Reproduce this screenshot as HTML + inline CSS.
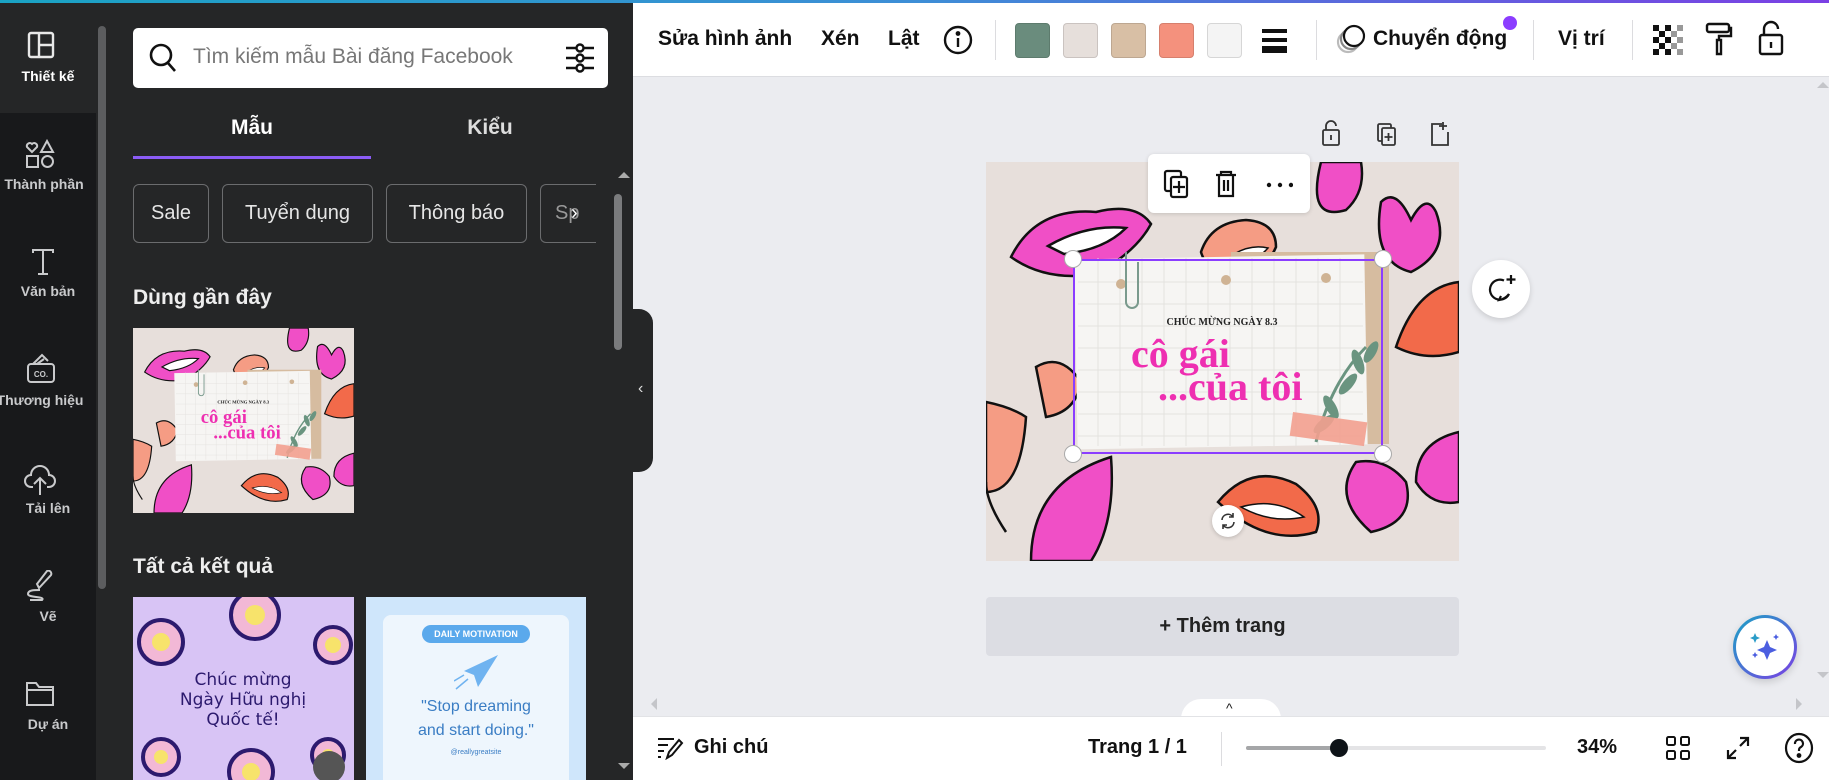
<!DOCTYPE html>
<html><head><meta charset="utf-8"><style>
*{margin:0;padding:0;box-sizing:border-box}
body{width:1829px;height:780px;overflow:hidden;background:#ebecf0;font-family:"Liberation Sans","DejaVu Sans",sans-serif;position:relative}
.a{position:absolute}
.nl{position:absolute;width:96px;text-align:center;color:#c9cacc;font-size:14px;font-weight:bold;white-space:nowrap}
.chip{position:absolute;top:184px;height:59px;border:1px solid #6b6c6e;border-radius:6px;color:#e6e6e6;font-size:20px;line-height:57px;text-align:center}
.tb{color:#111;font-size:21px;font-weight:bold;top:27px}
.sw{position:absolute;top:23px;width:35px;height:35px;border-radius:4px;border:1px solid rgba(0,0,0,.12)}
.sep{position:absolute;width:1px;background:#dcdcdf}
</style></head><body>
<div class="a" style="left:0;top:0;width:1829px;height:3px;background:linear-gradient(90deg,#1aa3c4,#3d8ed6 50%,#7b3fe4)"></div>

<!-- nav rail -->
<div class="a" style="left:0;top:3px;width:96px;height:777px;background:#18191b"></div>
<div class="a" style="left:0;top:3px;width:96px;height:110px;background:#252627"></div>
<svg class="a" style="left:27px;top:31px" width="28" height="28" viewBox="0 0 28 28" fill="none" stroke="#e8e8e8" stroke-width="2.4"><rect x="2" y="2" width="24" height="24" rx="2"/><path d="M12 2v24M12 14h14"/></svg>
<div class="nl" style="top:68px;color:#fff">Thiết kế</div>
<svg class="a" style="left:25px;top:139px" width="30" height="30" viewBox="0 0 30 30" fill="none" stroke="#c9cacc" stroke-width="2"><path d="M7 13l-5-5a3 3 0 0 1 5-3 3 3 0 0 1 5 3z"/><path d="M22 2l6 11h-12z"/><rect x="2" y="17" width="11" height="11"/><circle cx="22.5" cy="22.5" r="5.5"/></svg>
<div class="nl" style="top:176px;left:-4px">Thành phần</div>
<svg class="a" style="left:31px;top:248px" width="24" height="28" viewBox="0 0 24 28" fill="none" stroke="#c9cacc" stroke-width="2"><path d="M2 5V2h20v3M12 2v24M7 26h10"/></svg>
<div class="nl" style="top:283px">Văn bản</div>
<svg class="a" style="left:26px;top:352px" width="30" height="32" viewBox="0 0 30 32" fill="none" stroke="#c9cacc" stroke-width="2"><rect x="2" y="12" width="26" height="18" rx="3"/><path d="M7 12l9-9 6 6M11 12l7-5"/><text x="15" y="25" font-size="8" fill="#c9cacc" stroke="none" text-anchor="middle" font-family="Liberation Sans" font-weight="bold">CO.</text></svg>
<div class="nl" style="top:392px;left:-8px">Thương hiệu</div>
<svg class="a" style="left:24px;top:461px" width="32" height="36" viewBox="0 0 32 36" fill="none" stroke="#c9cacc" stroke-width="2"><path d="M9 26H7a6 6 0 0 1 0-12 9 9 0 0 1 18 0 6 6 0 0 1 0 12h-2"/><path d="M16 34V18M10 23l6-6 6 6"/></svg>
<div class="nl" style="top:500px">Tải lên</div>
<svg class="a" style="left:26px;top:570px" width="30" height="32" viewBox="0 0 30 32" fill="none" stroke="#c9cacc" stroke-width="2"><path d="M13 18l12-13a3 3 0 0 0-4-4L11 14zM14 20c-6 0-12 0-12 4s18 2 14 6H4"/></svg>
<div class="nl" style="top:608px">Vẽ</div>
<svg class="a" style="left:25px;top:681px" width="30" height="26" viewBox="0 0 30 26" fill="none" stroke="#c9cacc" stroke-width="2"><path d="M2 24V2h9l3 4h14v18z M2 9h26"/></svg>
<div class="nl" style="top:716px">Dự án</div>

<!-- panel -->
<div class="a" style="left:96px;top:3px;width:537px;height:777px;background:#252627"></div>
<div class="a" style="left:98px;top:26px;width:8px;height:563px;border-radius:4px;background:#5c5d5f"></div>
<div class="a" style="left:133px;top:28px;width:475px;height:60px;background:#fff;border-radius:5px"></div>
<svg class="a" style="left:149px;top:43px" width="28" height="30" viewBox="0 0 28 30" fill="none" stroke="#111" stroke-width="2.6"><circle cx="12" cy="12" r="10"/><path d="M19 20l7 8"/></svg>
<div class="a" style="left:193px;top:45px;color:#777;font-size:21px">Tìm kiếm mẫu Bài đăng Facebook</div>
<svg class="a" style="left:565px;top:43px" width="30" height="30" viewBox="0 0 30 30" fill="none" stroke="#111" stroke-width="2.4"><path d="M1 5h28M1 15h28M1 25h28"/><circle cx="15" cy="5" r="3.5" fill="#fff"/><circle cx="15" cy="15" r="3.5" fill="#fff"/><circle cx="15" cy="25" r="3.5" fill="#fff"/></svg>
<div class="a" style="left:133px;top:116px;width:238px;text-align:center;color:#fff;font-size:21px;font-weight:bold">Mẫu</div>
<div class="a" style="left:371px;top:116px;width:238px;text-align:center;color:#ddd;font-size:21px;font-weight:bold">Kiểu</div>
<div class="a" style="left:133px;top:156px;width:238px;height:3px;background:#8b5cf6"></div>
<div class="chip" style="left:133px;width:76px">Sale</div>
<div class="chip" style="left:222px;width:151px">Tuyển dụng</div>
<div class="chip" style="left:386px;width:141px">Thông báo</div>
<div class="chip" style="left:540px;width:56px;text-align:left;padding-left:14px;border-right:none;border-radius:6px 0 0 6px;overflow:hidden;color:#999">Sp<span style="position:absolute;left:30px;top:0;color:#fff">›</span></div>
<div class="a" style="left:614px;top:194px;width:8px;height:156px;border-radius:4px;background:#7a7b7d"></div>
<div class="a" style="left:133px;top:286px;color:#eee;font-size:21px;font-weight:bold">Dùng gần đây</div>
<div class="a" style="left:133px;top:555px;color:#eee;font-size:21px;font-weight:bold">Tất cả kết quả</div>

<svg class="a" style="left:133px;top:328px" width="221" height="185" viewBox="0 0 473 399" preserveAspectRatio="none"><use href="#design"/></svg>

<!-- results -->
<div class="a" style="left:133px;top:597px;width:221px;height:183px;background:#d8c4f5;overflow:hidden">
<svg width="221" height="183" viewBox="0 0 221 183"><g stroke="#2c1a6e" stroke-width="4" fill="#f2b8d6"><circle cx="28" cy="45" r="22"/><circle cx="122" cy="18" r="24"/><circle cx="200" cy="48" r="18"/><circle cx="28" cy="160" r="18"/><circle cx="118" cy="175" r="22"/><circle cx="195" cy="158" r="16"/></g><g fill="#f7e36b"><circle cx="28" cy="45" r="9"/><circle cx="122" cy="18" r="10"/><circle cx="200" cy="48" r="8"/><circle cx="28" cy="160" r="7"/><circle cx="118" cy="175" r="9"/><circle cx="195" cy="158" r="6"/></g><text x="110" y="88" font-size="17" fill="#2c1a6e" text-anchor="middle" font-family="DejaVu Sans">Chúc mừng</text><text x="110" y="108" font-size="17" fill="#2c1a6e" text-anchor="middle" font-family="DejaVu Sans">Ngày Hữu nghị</text><text x="110" y="128" font-size="17" fill="#2c1a6e" text-anchor="middle" font-family="DejaVu Sans">Quốc tế!</text><circle cx="196" cy="170" r="16" fill="#555"/></svg></div>
<div class="a" style="left:366px;top:597px;width:220px;height:183px;background:#cfe6fb;overflow:hidden">
<div class="a" style="left:17px;top:18px;width:186px;height:175px;background:#eef6fd;border-radius:8px"></div>
<div class="a" style="left:56px;top:28px;width:108px;height:18px;border-radius:9px;background:#5aa9ec;color:#fff;font-size:9px;line-height:18px;text-align:center;font-weight:bold">DAILY MOTIVATION</div>
<svg class="a" style="left:88px;top:58px" width="44" height="36" viewBox="0 0 44 36" fill="#6fb3f0"><path d="M44 0L10 16l10 4zM44 0L20 20l4 12z"/><path d="M14 24l-12 10M10 20l-10 6" stroke="#6fb3f0" stroke-width="1.5"/></svg>
<div class="a" style="left:0;top:98px;width:220px;text-align:center;color:#3a7dc4;font-size:16px;line-height:24px">"Stop dreaming<br>and start doing."</div>
<div class="a" style="left:0;top:152px;width:220px;text-align:center;color:#3a7dc4;font-size:7px">@reallygreatsite</div></div>

<div class="a" style="left:618px;top:172px;width:0;height:0;border:6px solid transparent;border-bottom-color:#aaa;border-top:none"></div>
<div class="a" style="left:618px;top:763px;width:0;height:0;border:6px solid transparent;border-top-color:#aaa;border-bottom:none"></div>
<div class="a" style="left:633px;top:309px;width:20px;height:163px;background:#252627;border-radius:0 14px 14px 0"></div>
<div class="a" style="left:638px;top:380px;color:#ddd;font-size:16px">‹</div>

<!-- toolbar -->
<div class="a" style="left:633px;top:3px;width:1196px;height:74px;background:#fff;border-bottom:1px solid #dcdde1"></div>
<div class="a tb" style="left:658px">Sửa hình ảnh</div>
<div class="a tb" style="left:821px">Xén</div>
<div class="a tb" style="left:888px">Lật</div>
<svg class="a" style="left:943px;top:25px" width="30" height="30" viewBox="0 0 30 30" fill="none" stroke="#111" stroke-width="2.4"><circle cx="15" cy="15" r="13"/><path d="M15 13v9"/><circle cx="15" cy="8.5" r="1.2" fill="#111"/></svg>
<div class="sep" style="left:995px;top:20px;height:40px"></div>
<div class="sw" style="left:1015px;background:#6a8c7d"></div>
<div class="sw" style="left:1063px;background:#e6dfdb"></div>
<div class="sw" style="left:1111px;background:#d8bfa5"></div>
<div class="sw" style="left:1159px;background:#f4917d"></div>
<div class="sw" style="left:1207px;background:#f4f4f4"></div>
<div class="a" style="left:1262px;top:29px;width:25px;height:4px;background:#111"></div>
<div class="a" style="left:1262px;top:38px;width:25px;height:4px;background:#111"></div>
<div class="a" style="left:1262px;top:46px;width:25px;height:7px;background:#111"></div>
<div class="sep" style="left:1316px;top:20px;height:40px"></div>
<svg class="a" style="left:1334px;top:24px" width="34" height="32" viewBox="0 0 34 32" fill="none" stroke-width="2.2"><circle cx="14" cy="18" r="10" stroke="#bbb"/><circle cx="17" cy="15" r="10" stroke="#888"/><circle cx="20" cy="12" r="10" stroke="#111" fill="#fff"/></svg>
<div class="a tb" style="left:1373px">Chuyển động</div>
<div class="a" style="left:1503px;top:16px;width:14px;height:14px;border-radius:50%;background:#8b3dff"></div>
<div class="sep" style="left:1533px;top:20px;height:40px"></div>
<div class="a tb" style="left:1558px">Vị trí</div>
<div class="sep" style="left:1632px;top:20px;height:40px"></div>
<svg class="a" style="left:1653px;top:25px" width="30" height="30" viewBox="0 0 30 30"><g fill="#111"><rect x="0" y="0" width="6" height="6"/><rect x="12" y="0" width="6" height="6"/><rect x="6" y="6" width="6" height="6"/><rect x="0" y="12" width="6" height="6"/><rect x="12" y="12" width="6" height="6"/><rect x="6" y="18" width="6" height="6"/><rect x="0" y="24" width="6" height="6"/><rect x="12" y="24" width="6" height="6"/></g><g fill="#999"><rect x="18" y="6" width="6" height="6"/><rect x="18" y="18" width="6" height="6"/><rect x="24" y="0" width="6" height="6"/><rect x="24" y="12" width="6" height="6"/><rect x="24" y="24" width="6" height="6"/></g></svg>
<svg class="a" style="left:1705px;top:22px" width="28" height="34" viewBox="0 0 28 34" fill="none" stroke="#111" stroke-width="2.4"><rect x="2" y="2" width="22" height="8" rx="2"/><path d="M24 6h2v8H14v4M12 18h4v14h-4z"/></svg>
<svg class="a" style="left:1757px;top:20px" width="28" height="36" viewBox="0 0 28 36" fill="none" stroke="#111" stroke-width="2.4"><path d="M7 15V9a7 7 0 0 1 14 0"/><rect x="3" y="15" width="22" height="19" rx="2"/><path d="M14 22v6"/></svg>

<svg class="a" style="left:1320px;top:120px" width="130" height="28" viewBox="0 0 130 28" fill="none" stroke="#333" stroke-width="1.8"><path d="M6 10V6a5 5 0 0 1 10 0"/><rect x="3" y="10" width="16" height="15" rx="1.5"/><path d="M11 15v5"/><rect x="58" y="4" width="13" height="17" rx="1.5"/><rect x="62" y="8" width="13" height="17" rx="1.5" fill="#ebecf0"/><path d="M68.5 13v8M64.5 17h8"/><path d="M122 4h-10v21h16V12M123 2v8M119 6h8"/></svg>
<div class="a" style="left:1817px;top:82px;width:0;height:0;border:6px solid transparent;border-bottom-color:#c4c5c9;border-top:none"></div>
<div class="a" style="left:1817px;top:672px;width:0;height:0;border:6px solid transparent;border-top-color:#c4c5c9;border-bottom:none"></div>
<div class="a" style="left:651px;top:698px;width:0;height:0;border:6px solid transparent;border-right-color:#c4c5c9;border-left:none"></div>
<div class="a" style="left:1796px;top:698px;width:0;height:0;border:6px solid transparent;border-left-color:#c4c5c9;border-right:none"></div>

<!-- design -->
<svg class="a" style="left:986px;top:162px" width="473" height="399" viewBox="0 0 473 399">
<defs><g id="design">
<rect width="473" height="399" fill="#e7dfdb"/>
<g stroke="#111" stroke-width="2.5">
<path d="M25 95 Q50 45 110 50 Q150 40 165 62 Q150 90 110 112 Q60 120 25 95z" fill="#f04fc6"/>
<path d="M62 84 Q100 62 140 66 Q118 88 78 92z" fill="#fff"/>
<path d="M215 90 Q225 60 260 58 Q290 60 290 85 Q280 110 240 112 Q220 108 215 90z" fill="#f59c84"/>
<path d="M248 92 Q265 82 282 86 Q270 100 252 98z" fill="#fff" stroke-width="1.5"/>
<path d="M335 0 Q320 60 360 48 Q380 30 375 0z" fill="#f04fc6"/>
<path d="M395 40 Q385 100 425 110 Q465 90 450 50 Q440 30 425 58 Q410 25 395 40z" fill="#f04fc6"/>
<path d="M473 120 Q430 125 410 185 Q440 200 473 190z" fill="#f26a4a"/>
<path d="M0 240 Q25 245 40 255 Q35 330 0 330z" fill="#f59c84"/>
<path d="M20 370 Q0 340 0 320" fill="none"/>
<path d="M50 205 Q75 190 95 220 Q90 250 60 255z" fill="#f59c84"/>
<path d="M473 270 Q430 280 430 320 Q445 345 473 340z" fill="#f04fc6"/>
<path d="M370 300 Q345 335 385 370 Q430 360 420 320 Q400 295 370 300z" fill="#f04fc6"/>
<path d="M45 399 Q45 320 125 295 Q130 360 105 399z" fill="#f04fc6"/>
<path d="M232 340 Q265 300 310 322 Q340 345 330 370 Q280 385 232 340z" fill="#f26a4a"/>
<path d="M255 345 Q290 335 318 355 Q285 362 255 345z" fill="#fff" stroke-width="1.5"/>
</g>
<rect x="245" y="90" width="158" height="192" fill="#d6bca0"/>
<rect x="90" y="95" width="290" height="190" fill="#f6f5f3" transform="rotate(-1 230 190)"/>
<g stroke="#e4e2df" stroke-width="1"><path d="M92 120h285M92 142h285M92 164h285M92 186h285M92 208h285M92 230h285M92 252h285M92 274h285M112 96v188M134 96v188M156 96v188M178 96v188M200 96v188M222 96v188M244 96v188M266 96v188M288 96v188M310 96v188M332 96v188M354 96v188"/></g>
<circle cx="135" cy="122" r="5" fill="#cfb394"/><circle cx="240" cy="118" r="5" fill="#cfb394"/><circle cx="340" cy="116" r="5" fill="#cfb394"/>
<path d="M140 90 v50 a6 6 0 0 0 12 0 v-40" fill="none" stroke="#7a9a8d" stroke-width="2"/>
<text x="236" y="163" font-family="Liberation Serif" font-size="10" font-weight="bold" fill="#222" text-anchor="middle">CHÚC MỪNG NGÀY 8.3</text>
<text x="145" y="205" font-family="Liberation Serif" font-size="40" font-weight="bold" fill="#ee2fb1">cô gái</text>
<text x="172" y="238" font-family="Liberation Serif" font-size="40" font-weight="bold" fill="#ee2fb1">...của tôi</text>
<path d="M330 280 Q345 220 380 185" fill="none" stroke="#6a9480" stroke-width="3"/>
<g fill="#6a9480"><ellipse cx="345" cy="245" rx="5" ry="13" transform="rotate(-30 345 245)"/><ellipse cx="362" cy="222" rx="5" ry="13" transform="rotate(40 362 222)"/><ellipse cx="372" cy="200" rx="5" ry="13" transform="rotate(-20 372 200)"/><ellipse cx="338" cy="262" rx="5" ry="13" transform="rotate(50 338 262)"/><ellipse cx="385" cy="190" rx="5" ry="12" transform="rotate(30 385 190)"/></g>
<rect x="305" y="255" width="75" height="24" fill="#f3a08f" opacity=".9" transform="rotate(8 342 267)"/>
</g></defs>
<use href="#design"/>
</svg>

<div class="a" style="left:1073px;top:259px;width:310px;height:195px;border:2px solid #8b3dff"></div>
<div class="a" style="left:1064px;top:250px;width:18px;height:18px;border-radius:50%;background:#fff;border:1px solid #aaa"></div>
<div class="a" style="left:1374px;top:250px;width:18px;height:18px;border-radius:50%;background:#fff;border:1px solid #aaa"></div>
<div class="a" style="left:1064px;top:445px;width:18px;height:18px;border-radius:50%;background:#fff;border:1px solid #aaa"></div>
<div class="a" style="left:1374px;top:445px;width:18px;height:18px;border-radius:50%;background:#fff;border:1px solid #aaa"></div>
<div class="a" style="left:1212px;top:505px;width:32px;height:32px;border-radius:50%;background:#fff;box-shadow:0 1px 4px rgba(0,0,0,.2)"></div>
<svg class="a" style="left:1219px;top:512px" width="18" height="18" viewBox="0 0 18 18" fill="none" stroke="#333" stroke-width="1.6"><path d="M3 8a6 6 0 0 1 11-3M15 10a6 6 0 0 1-11 3M14 1v4h-4M4 17v-4h4"/></svg>
<div class="a" style="left:1148px;top:154px;width:162px;height:59px;background:#fff;border-radius:6px;box-shadow:0 1px 4px rgba(0,0,0,.15)"></div>
<svg class="a" style="left:1163px;top:169px" width="130" height="30" viewBox="0 0 130 30" fill="none" stroke="#111" stroke-width="2.2"><rect x="2" y="2" width="16" height="20" rx="2"/><rect x="8" y="8" width="16" height="20" rx="2" fill="#fff"/><path d="M16 12v12M10 18h12"/><path d="M53 6h20M58 6V3h10v3M56 6v21h14V6M61 11v11M65 11v11"/><circle cx="106" cy="16" r="2.2" fill="#111" stroke="none"/><circle cx="117" cy="16" r="2.2" fill="#111" stroke="none"/><circle cx="128" cy="16" r="2.2" fill="#111" stroke="none"/></svg>
<div class="a" style="left:1472px;top:260px;width:58px;height:58px;border-radius:50%;background:#fff;box-shadow:0 2px 6px rgba(0,0,0,.15)"></div>
<svg class="a" style="left:1485px;top:272px" width="34" height="34" viewBox="0 0 34 34" fill="none" stroke="#111" stroke-width="2.2"><path d="M19 8.5A10 10 0 1 0 24 22"/><path d="M24 22q-4 5-10 6l2-4"/><path d="M26 3v9M21.5 7.5h9"/></svg>

<div class="a" style="left:986px;top:597px;width:473px;height:59px;background:#dcdde3;border-radius:4px;text-align:center;line-height:59px;font-size:20px;font-weight:bold;color:#222">+ Thêm trang</div>
<div class="a" style="left:1733px;top:615px;width:64px;height:64px;border-radius:50%;background:linear-gradient(135deg,#1aa3c4,#7b3fe4);box-shadow:0 3px 8px rgba(0,0,0,.15)"></div>
<div class="a" style="left:1736px;top:618px;width:58px;height:58px;border-radius:50%;background:#fff"></div>
<svg class="a" style="left:1750px;top:632px" width="32" height="30" viewBox="0 0 32 30" fill="#4b5ee0"><path d="M17 8l3 7 7 3-7 3-3 7-3-7-7-3 7-3z"/><path d="M5 1l1.5 3.5L10 6 6.5 7.5 5 11 3.5 7.5 0 6l3.5-1.5z" fill="#2a9cc8"/><path d="M26 2l1 2 2 1-2 1-1 2-1-2-2-1 2-1z"/><path d="M5 20l1 2 2 1-2 1-1 2-1-2-2-1 2-1z"/></svg>

<div class="a" style="left:1181px;top:699px;width:100px;height:30px;background:#fff;border-radius:20px 20px 0 0"></div>
<div class="a" style="left:1226px;top:700px;font-size:14px;color:#222">^</div>
<div class="a" style="left:633px;top:716px;width:1196px;height:64px;background:#fff;border-top:1px solid #e2e3e6"></div>
<svg class="a" style="left:657px;top:736px" width="28" height="24" viewBox="0 0 28 24" fill="none" stroke="#111" stroke-width="2"><path d="M1 3h16M1 9h10M1 15h6M1 21h3"/><path d="M10 22l2-6 10-12 3 3-10 12z"/></svg>
<div class="a" style="left:694px;top:736px;font-size:20px;color:#111;font-weight:bold">Ghi chú</div>
<div class="a" style="left:1088px;top:736px;font-size:20px;color:#111;font-weight:bold">Trang 1 / 1</div>
<div class="sep" style="left:1221px;top:732px;height:34px"></div>
<div class="a" style="left:1246px;top:746px;width:300px;height:4px;background:#e4e4e6;border-radius:2px"></div>
<div class="a" style="left:1246px;top:746px;width:92px;height:4px;background:#a5a6a8;border-radius:2px"></div>
<div class="a" style="left:1330px;top:739px;width:18px;height:18px;border-radius:50%;background:#0e1318"></div>
<div class="a" style="left:1577px;top:736px;font-size:20px;color:#111;font-weight:bold">34%</div>
<svg class="a" style="left:1666px;top:736px" width="24" height="24" viewBox="0 0 24 24" fill="none" stroke="#111" stroke-width="2"><rect x="1" y="1" width="8" height="8" rx="1.5"/><rect x="15" y="1" width="8" height="8" rx="1.5"/><rect x="1" y="15" width="8" height="8" rx="1.5"/><rect x="15" y="15" width="8" height="8" rx="1.5"/></svg>
<svg class="a" style="left:1726px;top:736px" width="24" height="24" viewBox="0 0 24 24" fill="none" stroke="#111" stroke-width="2.2"><path d="M14 2h8v8M22 2l-8 8M10 22H2v-8M2 22l8-8"/></svg>
<svg class="a" style="left:1784px;top:732px" width="30" height="32" viewBox="0 0 30 32" fill="none" stroke="#111" stroke-width="2.2"><ellipse cx="15" cy="16" rx="13" ry="14"/><path d="M11 12a4 4 0 1 1 6 3c-2 1-2 2-2 4"/><circle cx="15" cy="23.5" r="1.3" fill="#111"/></svg>
</body></html>
